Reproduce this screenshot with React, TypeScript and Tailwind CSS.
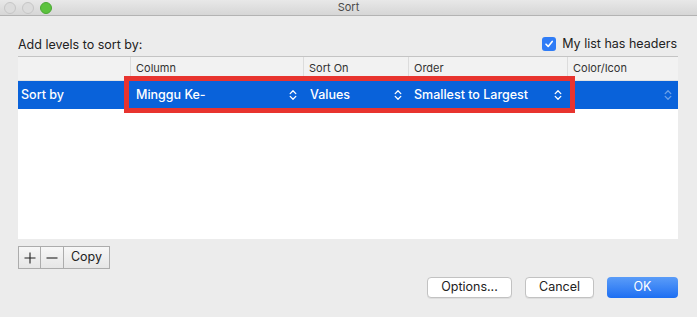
import React from 'react'

const FONT = { fontFamily: 'Inter, "Liberation Sans", sans-serif' }

const Chevrons = ({ faded = false }: { faded?: boolean }) => (
  <svg width="8" height="12" viewBox="0 0 8 12" fill="none" className={faded ? 'opacity-40' : ''}>
    <path d="M1.2 4.6 L4 1.8 L6.8 4.6" stroke="white" strokeWidth="1.3" strokeLinecap="round" strokeLinejoin="round" />
    <path d="M1.2 7.4 L4 10.2 L6.8 7.4" stroke="white" strokeWidth="1.3" strokeLinecap="round" strokeLinejoin="round" />
  </svg>
)

const Light = ({ color }: { color: 'gray' | 'green' }) => (
  <span
    className={
      color === 'green'
        ? 'block w-3 h-3 rounded-full bg-[#5cc23e] border border-[#4aa834]'
        : 'block w-3 h-3 rounded-full bg-[#dcdcdc] border border-[#c6c6c6]'
    }
  />
)

const HEAD = ['', 'Column', 'Sort On', 'Order', 'Color/Icon']

export default function App() {
  return (
    <div className="w-[697px] h-[317px] bg-[#ececec] overflow-hidden text-[#222]" style={FONT}>
      {/* title bar */}
      <div className="h-[16px] grid grid-cols-[1fr_auto_1fr] items-center bg-gradient-to-b from-[#e8e8e8] to-[#d6d6d6] border-b border-[#b3b3b3]">
        <div className="flex items-center gap-[6px] pl-[4px]">
          <Light color="gray" />
          <Light color="gray" />
          <Light color="green" />
        </div>
        <div className="text-[11px] text-[#4a4a4a] leading-none">Sort</div>
        <div />
      </div>

      <div className="pl-[18px] pr-[19px]">
        {/* top line */}
        <div className="h-[40px] flex items-end justify-between pb-[5px]">
          <span className="text-[12.5px] leading-none">Add levels to sort by:</span>
          <label className="flex items-center gap-[6px] pr-[1px]">
            <span className="w-[14px] h-[14px] rounded-[3px] bg-[#2f7cf6] flex items-center justify-center">
              <svg width="10" height="10" viewBox="0 0 10 10" fill="none">
                <path d="M2 5.2 L4.2 7.4 L8.2 2.4" stroke="white" strokeWidth="1.6" strokeLinecap="round" strokeLinejoin="round" />
              </svg>
            </span>
            <span className="text-[12.5px] leading-none">My list has headers</span>
          </label>
        </div>

        {/* table */}
        <div className="relative h-[183px] bg-white border-t border-[#c4c4c4]">
          <div className="grid grid-cols-[112px_173px_105px_159px_111px] h-[24px] bg-[#f2f2f2] border-b border-[#e2e2e2]">
            {HEAD.map((h, i) => (
              <div
                key={i}
                className={`flex items-center pl-[5px] text-[11px] text-[#333] ${i > 0 ? 'border-l border-[#dcdcdc]' : ''}`}
              >
                {h}
              </div>
            ))}
          </div>
          <div className="grid grid-cols-[112px_173px_105px_159px_111px] h-[28px] bg-[#0962da] text-white text-[12.5px] font-medium">
            <div className="flex items-center pl-[3px]">Sort by</div>
            <div className="flex items-center justify-between pl-[6px] pr-[6px]">
              <span>Minggu Ke-</span>
              <Chevrons />
            </div>
            <div className="flex items-center justify-between pl-[7px] pr-[6px]">
              <span>Values</span>
              <Chevrons />
            </div>
            <div className="flex items-center justify-between pl-[6px] pr-[5px]">
              <span>Smallest to Largest</span>
              <Chevrons />
            </div>
            <div className="flex items-center justify-end pr-[6px]">
              <Chevrons faded />
            </div>
          </div>

          {/* highlight box */}
          <div className="absolute left-[106px] top-[19px] w-[451px] h-[37px] border-[5px] border-[#e8342f]" />
        </div>

        {/* +/- copy */}
        <div className="mt-[7px] flex h-[23px] w-[92px] border border-[#acacac] bg-gradient-to-b from-[#f7f7f7] to-[#e6e6e6] text-[12.5px]">
          <div className="w-[22px] flex items-center justify-center border-r border-[#acacac]">
            <svg width="12" height="12" viewBox="0 0 12 12">
              <path d="M6 0.5 V11.5 M0.5 6 H11.5" stroke="#222" strokeWidth="1.1" />
            </svg>
          </div>
          <div className="w-[23px] flex items-center justify-center border-r border-[#acacac]">
            <svg width="12" height="12" viewBox="0 0 12 12">
              <path d="M0.5 6 H11.5" stroke="#222" strokeWidth="1.1" />
            </svg>
          </div>
          <div className="flex-1 flex items-center justify-center">Copy</div>
        </div>

        {/* buttons */}
        <div className="mt-[8px] flex justify-end gap-[13px] text-[12.5px]">
          <button className="w-[85px] h-[21px] rounded-[4px] bg-white border border-[#c2c2c2] shadow-[0_1px_0_rgba(0,0,0,0.06)]">
            Options...
          </button>
          <button className="w-[69px] h-[21px] rounded-[4px] bg-white border border-[#c2c2c2] shadow-[0_1px_0_rgba(0,0,0,0.06)]">
            Cancel
          </button>
          <button className="w-[71px] h-[21px] rounded-[4px] bg-gradient-to-b from-[#5a9cf8] to-[#1b6ef2] text-white">
            OK
          </button>
        </div>
      </div>
    </div>
  )
}
